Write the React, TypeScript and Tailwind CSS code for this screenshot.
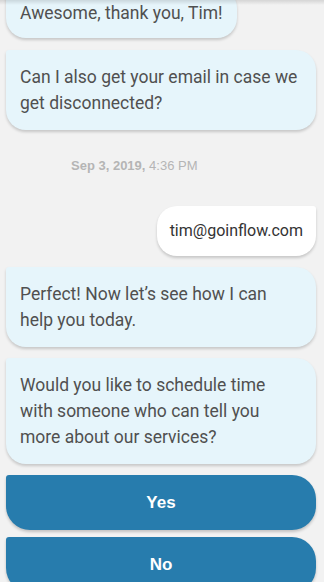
import React from "react";

const bot = [
  "Perfect! Now let’s see how I can help you today.",
  "Would you like to schedule time with someone who can tell you more about our services?",
];

const BotBubble = ({ children, className = "" }: { children: React.ReactNode; className?: string }) => (
  <div
    className={`w-fit max-w-[310px] bg-[#e6f5fb] text-[#505050] text-[17.5px] leading-[26px] rounded-[20px] rounded-tl-[3px] shadow-[0_2px_3px_rgba(0,0,0,0.18)] ${className}`}
  >
    {children}
  </div>
);

const App: React.FC = () => {
  return (
    <div
      className="relative h-[582px] w-[324px] overflow-hidden bg-[#f2f2f2]"
      style={{ fontFamily: "Roboto, 'Liberation Sans', sans-serif" }}
    >
      <div className="absolute inset-x-0 top-0 z-10 h-[5px] bg-gradient-to-b from-[rgba(0,0,0,0.12)] to-transparent" />
      <div className="flex flex-col pl-[6px] pr-[8px] mt-[-12px]">
        <BotBubble className="px-[14px] py-[12px]">Awesome, thank you, Tim!</BotBubble>
        <BotBubble className="mt-[12px] px-[14px] py-[14px]">
          Can I also get your email in case we get disconnected?
        </BotBubble>

        <div
          className="pt-[28px] pb-[32px] pl-[65px] text-[13px] leading-[16px] text-[#b5b5b5]"
          style={{ fontFamily: "'Liberation Sans', Arial, sans-serif" }}
        >
          <span className="font-bold">Sep 3, 2019,</span> 4:36 PM
        </div>

        <div className="self-end w-fit bg-white text-[#333333] text-[16px] leading-[26px] px-[13px] py-[12px] rounded-[20px] rounded-tr-[3px] shadow-[0_2px_3px_rgba(0,0,0,0.18)]">
          tim@goinflow.com
        </div>

        {bot.map((t, i) => (
          <BotBubble key={i} className="mt-[11px] px-[14px] py-[14px]">
            {t}
          </BotBubble>
        ))}

        <div
          className="mt-[11px] flex flex-col gap-[7px]"
          style={{ fontFamily: "'Liberation Sans', Arial, sans-serif" }}
        >
          {["Yes", "No"].map((label) => (
            <button
              key={label}
              className="h-[55px] w-full bg-[#277cad] text-white text-[17px] font-bold rounded-[24px] rounded-tl-[3px] shadow-[0_2px_3px_rgba(0,0,0,0.2)]"
            >
              {label}
            </button>
          ))}
        </div>
      </div>
    </div>
  );
};

export default App;
